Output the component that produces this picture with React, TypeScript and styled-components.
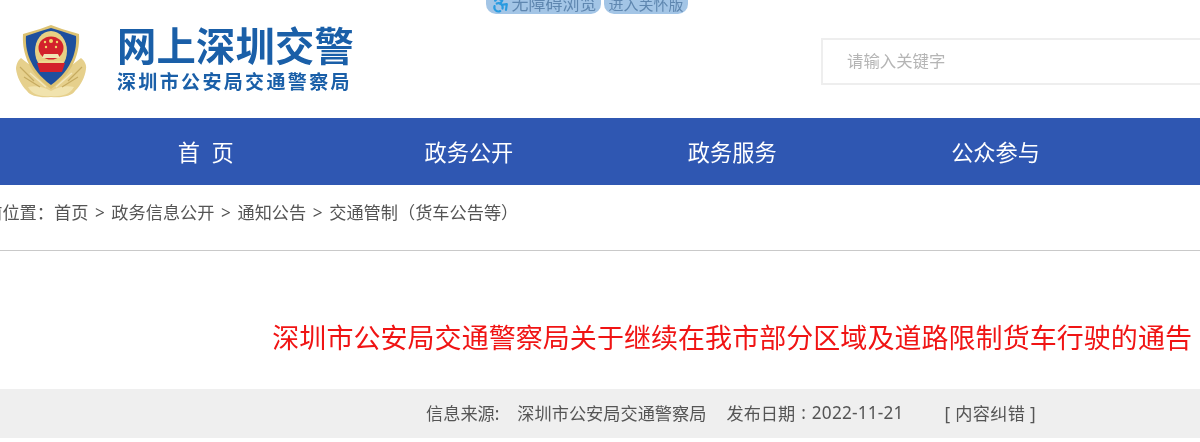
import styled, { createGlobalStyle } from "styled-components";
import { Accessibility } from "lucide-react";

const GlobalStyle = createGlobalStyle`
  html, body { margin: 0; padding: 0; background: #fff; overflow: hidden; }
  body { font-family: "Noto Sans", "Noto Sans CJK SC", sans-serif; }
`;

const Page = styled.div`
  width: 1200px;
  height: 442px;
  overflow: hidden;
  position: relative;
  filter: blur(0.4px);
`;

/* care-mode pills hanging off the top edge */
const TopPills = styled.div`
  position: absolute;
  top: 0;
  left: 486px;
  display: flex;
  gap: 3px;
`;

const Pill = styled.div<{ $w: number; $size: number }>`
  width: ${(p) => p.$w}px;
  height: 14px;
  box-sizing: border-box;
  background: #a3c5e6;
  border-radius: 0 0 10px 10px;
  display: flex;
  align-items: flex-end;
  justify-content: center;
  gap: 1px;
  overflow: hidden;
  color: #5f87b0;
  font-size: ${(p) => p.$size}px;
  line-height: 20px;
  white-space: nowrap;
  svg { color: #2a9be0; flex-shrink: 0; }
`;

const Header = styled.header`
  height: 118px;
  box-sizing: border-box;
  display: flex;
  align-items: flex-start;
  padding: 25px 0 0 16px;
`;

const Badge = styled.svg`
  width: 71px;
  height: 73px;
  flex-shrink: 0;
`;

const Brand = styled.div`
  margin: -2px 0 0 30px;
  color: #1a5fa8;
  font-weight: 700;
  display: flex;
  flex-direction: column;
`;

const BrandTitle = styled.div`
  font-size: 39.3px;
  line-height: 47px;
  letter-spacing: 0.2px;
  white-space: nowrap;
`;

const BrandSub = styled.div`
  font-size: 19px;
  line-height: 24px;
  letter-spacing: 2.35px;
  white-space: nowrap;
`;

const Search = styled.div`
  margin: 13px -6px 0 auto;
  width: 385px;
  height: 47px;
  box-sizing: border-box;
  border: 2px solid #eeeeee;
  padding: 0 0 4px 24px;
  display: flex;
  align-items: center;
  color: #b5b5b5;
  font-size: 16.4px;
`;

const Nav = styled.nav`
  height: 67px;
  box-sizing: border-box;
  padding: 0 0 0 74px;
  background: #2f57b2;
  display: flex;
  align-items: center;
`;

const NavItem = styled.div`
  width: 263.3px;
  text-align: center;
  color: #fff;
  font-size: 22.2px;
  white-space: pre;
`;

const Crumbs = styled.div`
  height: 66px;
  box-sizing: border-box;
  border-bottom: 1px solid #c9c9c9;
  display: flex;
  align-items: flex-start;
  padding-top: 15px;
  margin-left: -32px;
  color: #555;
  font-size: 17.2px;
  line-height: 26px;
  white-space: pre;
`;

const CrumbSep = styled.span`
  margin: 0 6px;
  width: 11px;
  text-align: center;
`;

const Title = styled.h1`
  margin: 0;
  height: 138px;
  box-sizing: border-box;
  padding: 69px 8px 0 0;
  text-align: right;
  color: #f01414;
  font-size: 27px;
  font-weight: 400;
  line-height: 36px;
  letter-spacing: 0.05px;
  white-space: nowrap;
`;

const Meta = styled.div`
  height: 49px;
  box-sizing: border-box;
  background: #efefef;
  display: flex;
  align-items: center;
  padding: 0 0 2px 426px;
  color: #555;
  font-size: 17.2px;
  white-space: pre;
`;

const MetaItem = styled.span<{ $gap?: number; $spacing?: number }>`
  margin-left: ${(p) => p.$gap ?? 0}px;
  letter-spacing: ${(p) => p.$spacing ?? 0}px;
`;

function PoliceBadge() {
  return (
    <Badge viewBox="0 0 71 73">
      {/* wheat wreath */}
      <path d="M35 72 C24 73 14 71 11 66 C5 60 1 52 0 44 C0 40 2 35 5 33 L14 40 L35 60 L56 40 L65 33 C68 35 71 40 70 44 C69 52 65 60 59 66 C56 71 46 73 35 72Z" fill="#e6d08c" />
      <path d="M12 62 C20 60 28 62 35 66 C42 62 50 60 58 62 C54 70 44 72 35 71 C26 72 16 70 12 62Z" fill="#f1e3ae" />
      <path d="M4 42 L18 56 M66 42 L52 56 M8 52 L24 62 M62 52 L46 62" stroke="#c6ab60" strokeWidth="1.2" fill="none" />
      <path d="M14 48 L30 62 M56 48 L40 62" stroke="#f3e8bd" strokeWidth="1.5" fill="none" />
      {/* shield */}
      <path d="M35 0 L46 4 L63 9 C64 24 60 46 35 64 C10 46 6 24 7 9 L24 4Z" fill="#dcc272" />
      <path d="M35 3 L45 6 L60 11 C61 24 57 44 35 60 C13 44 9 24 10 11 L25 6Z" fill="#1d4f9e" />
      {/* emblem */}
      <ellipse cx="35" cy="26" rx="16" ry="20" fill="#e8d084" />
      <ellipse cx="35" cy="23" rx="12.5" ry="11.5" fill="#d3212b" />
      <path d="M28 29 H42 L44 33 H26Z" fill="#f0e4b4" />
      <path d="M21 38 H49 L46 47 H24Z" fill="#d3212b" />
      <path d="M23 36 H47 V38 H23Z" fill="#ecd98f" />
      <g fill="#f2d76a">
        <circle cx="35" cy="16" r="2" />
        <circle cx="29" cy="17" r="1.2" />
        <circle cx="41" cy="17" r="1.2" />
        <circle cx="30" cy="22" r="1.2" />
        <circle cx="40" cy="22" r="1.2" />
      </g>
    </Badge>
  );
}

export default function App() {
  return (
    <>
      <GlobalStyle />
      <Page>
        <TopPills>
          <Pill $w={115} $size={17}>
            <Accessibility size={20} strokeWidth={2.6} />
            无障碍浏览
          </Pill>
          <Pill $w={84} $size={15}>进入关怀版</Pill>
        </TopPills>
        <Header>
          <PoliceBadge />
          <Brand>
            <BrandTitle>网上深圳交警</BrandTitle>
            <BrandSub>深圳市公安局交通警察局</BrandSub>
          </Brand>
          <Search>请输入关键字</Search>
        </Header>
        <Nav>
          <NavItem>{"首  页"}</NavItem>
          <NavItem>政务公开</NavItem>
          <NavItem>政务服务</NavItem>
          <NavItem>公众参与</NavItem>
        </Nav>
        <Crumbs>
          当前位置：首页
          <CrumbSep>&gt;</CrumbSep>
          政务信息公开
          <CrumbSep>&gt;</CrumbSep>
          通知公告
          <CrumbSep>&gt;</CrumbSep>
          交通管制（货车公告等）
        </Crumbs>
        <Title>深圳市公安局交通警察局关于继续在我市部分区域及道路限制货车行驶的通告</Title>
        <Meta>
          <MetaItem>信息来源:</MetaItem>
          <MetaItem $gap={18}>深圳市公安局交通警察局</MetaItem>
          <MetaItem $gap={20}>发布日期</MetaItem>
          <MetaItem $gap={6}>:</MetaItem>
          <MetaItem $gap={6} $spacing={0.2}>2022-11-21</MetaItem>
          <MetaItem $gap={41} $spacing={0.3}>[ 内容纠错 ]</MetaItem>
        </Meta>
      </Page>
    </>
  );
}
